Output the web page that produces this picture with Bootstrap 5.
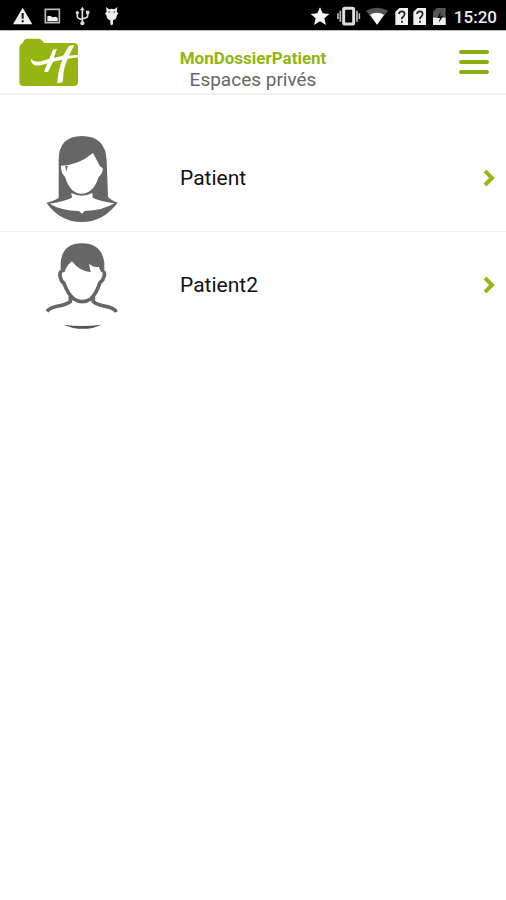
<!DOCTYPE html>
<html lang="fr">
<head>
<meta charset="utf-8">
<meta name="viewport" content="width=device-width, initial-scale=1">
<title>MonDossierPatient</title>
<link href="https://cdn.jsdelivr.net/npm/bootstrap@5.3.0/dist/css/bootstrap.min.css" rel="stylesheet">
<style>
body { font-family: Roboto, "Liberation Sans", sans-serif; background: #fff; color: #111; }
svg { display: block; flex: none; }
.status-bar { height: 30px; background: #000; color: #eee; padding: 0 9px 0 0; font-size: 17px; line-height: 34px; font-weight: 500; }
.app-header { height: 65px; border-top: 1px solid #bbb; border-bottom: 2px solid #f0f0f0; }
.header-side { flex: 1 1 0; }
.app-title { color: #92b512; font-size: 17px; line-height: 22px; font-weight: 700; }
.app-subtitle { color: #666; font-size: 19px; line-height: 22px; }
.menu-button { color: #88ac12; margin-right: 17px; }
.spaces { padding-top: 30px; }
.space-row { height: 106px; padding: 0 10px 0 35px; gap: 50px; color: #111; font-size: 21px; }
.space-row:hover { color: #111; }
.space-name { padding-top: 2px; }
.space-item + .space-item { border-top: 1px solid #f0f0f0; }
</style>
</head>
<body>
<div class="status-bar d-flex justify-content-between">
  <svg width="130" height="30" viewBox="0 0 390 90" aria-hidden="true">
    <path d="M68 23 97 73H39Z" fill="#f2f2f2"/><path d="M68 39v17M68 61v6" stroke="#111" stroke-width="6"/>
    <rect x="136" y="28" width="42" height="40" fill="none" stroke="#bbb" stroke-width="5"/><path d="M142 64V49l8-2 8 5 10-2 5 4v10Z" fill="#eee"/>
    <g fill="none" stroke="#ddd" stroke-width="5"><path d="M247 27v44M232 38v12q0 5 15 9M263 36v11q0 7-16 9"/></g>
    <g fill="#ddd"><path d="m247 20 7 11h-14Z"/><circle cx="232" cy="38" r="5"/><path d="M258 32h10v10h-10Z"/><circle cx="247" cy="70" r="6"/></g>
    <path d="m318 21 9 7q8-3 16 0l9-7-2 14 5 5-4 6q-2 14-12 15v11q-4 8-8 0V61q-10-2-12-15l-4-6 5-5Z" fill="#eee"/><path d="M325 36h4M341 36h4" stroke="#555" stroke-width="4"/>
  </svg>
  <div class="d-flex">
    <svg width="144" height="30" viewBox="27 0 432 90" aria-hidden="true">
      <path d="m57 22 8 18 20 2-15 13 5 20-18-11-18 11 5-20-15-13 20-2Z" fill="#f5f5f5"/>
      <rect x="128" y="25" width="30" height="47" rx="4" fill="none" stroke="#ddd" stroke-width="9"/><path d="M118 32v33M168 32v33M111 40v17M175 40v17" stroke="#bbb" stroke-width="5"/>
      <path d="M195 32q33-18 66 0l-33 42Z" fill="#555"/><path d="M207 44q21-12 42 0l-21 30Z" fill="#fff"/>
      <path d="M295 24h26v51h-38V36ZM349 24h26v51h-38V36Z" fill="#f0f0f0"/>
      <g fill="none" stroke="#222" stroke-width="5"><path d="M294 42q0-8 9-8 8 0 8 8 0 5-8 12v4M303 62v6M348 42q0-8 9-8 8 0 8 8 0 5-8 12v4M357 62v6"/></g>
      <path d="M407 24h27v51h-38V35Z" fill="#555"/><path d="M396 53h38v22h-38Z" fill="#eee"/><path d="m420 34-12 20h9l-4 15 14-22h-10Z" fill="#111"/>
    </svg>
    <span>15:20</span>
  </div>
</div>
<header class="app-header d-flex">
  <div class="header-side">
    <svg width="100" height="62" viewBox="0 9 300 186" role="img" aria-label="Logo">
      <path d="M58 60q0-11 8-13l6-10q3-5 10-5h34q6 0 9 5l7 8h89q13 0 13 13v103q0 13-13 13H70q-12 0-12-13Z" fill="#95b512"/>
      <path d="M92 93q14 12 32 7l24-8 11-27 12-3-10 28 28-7 18-29 16-3-16 32 28-3v8l-32 4q-9 20-12 41l-3 30-16 3q1-37 15-71l-28 6-15 31-12-1 10-25-20 6q-28 5-30-19Z" fill="#fff"/>
    </svg>
  </div>
  <div class="text-center pt-3">
    <h1 class="app-title m-0">MonDossierPatient</h1>
    <div class="app-subtitle">Espaces privés</div>
  </div>
  <div class="header-side d-flex justify-content-end">
    <button class="menu-button btn p-0 border-0" type="button" aria-label="Menu">
      <svg width="30" height="26" viewBox="0 0 30 26"><path d="M2 3h26M2 13h26M2 23h26" stroke="currentColor" stroke-width="4" stroke-linecap="round"/></svg>
    </button>
  </div>
</header>
<main>
  <ul class="spaces list-unstyled m-0">
    <li class="space-item">
      <a href="#" class="space-row d-flex align-items-center text-decoration-none">
        <svg width="95" height="106" viewBox="0 0 285 318" aria-hidden="true">
          <path fill="#666" fill-rule="evenodd" d="M71 218V105q0-72 70-72t74 72l4 110q9 10 29 18-44 58-108 58T34 233q29-7 37-15ZM78 122q50 0 96-38l21 40 8 5q1 17-12 27-16 50-51 50t-50-51q-13-12-12-33ZM109 204l2 14q-22 10-67 18 32 20 88 22l9 8 8-8q54-1 89-23-42-6-65-17l-1-14q-31 16-63 0Z"/>
          <path d="m90 122 8 1-3 17Z" fill="#666"/>
        </svg>
        <span class="space-name flex-grow-1">Patient</span>
        <svg width="14" height="20" viewBox="0 0 14 20" aria-hidden="true"><path d="m3 3 7 7-7 7" fill="none" stroke="#97b816" stroke-width="4"/></svg>
      </a>
    </li>
    <li class="space-item">
      <a href="#" class="space-row d-flex align-items-center text-decoration-none">
        <svg width="95" height="106" viewBox="0 12 285 318" aria-hidden="true">
          <path fill="#666" d="M77 134V105q4-59 64-59t67 59v29l-10-3-7-15q-14 3-25-6l-4-2 5 25q-34-4-56-33-18 14-22 32Z"/>
          <path d="M79 129q-9 8 1 30l7 7q12 33 30 47 24 16 50 0 16-14 28-49l8-8q9-19 3-26M106 203v18q-11 9-36 13t-34 16M175 203v18q12 10 37 14t32 17" fill="none" stroke="#666" stroke-width="11"/>
          <path d="M85 290q56 8 115 0-55 25-115 0Z" fill="#555"/>
        </svg>
        <span class="space-name flex-grow-1">Patient2</span>
        <svg width="14" height="20" viewBox="0 0 14 20" aria-hidden="true"><path d="m3 3 7 7-7 7" fill="none" stroke="#97b816" stroke-width="4"/></svg>
      </a>
    </li>
  </ul>
</main>
<script src="https://cdn.jsdelivr.net/npm/bootstrap@5.3.0/dist/js/bootstrap.bundle.min.js"></script>
</body>
</html>
